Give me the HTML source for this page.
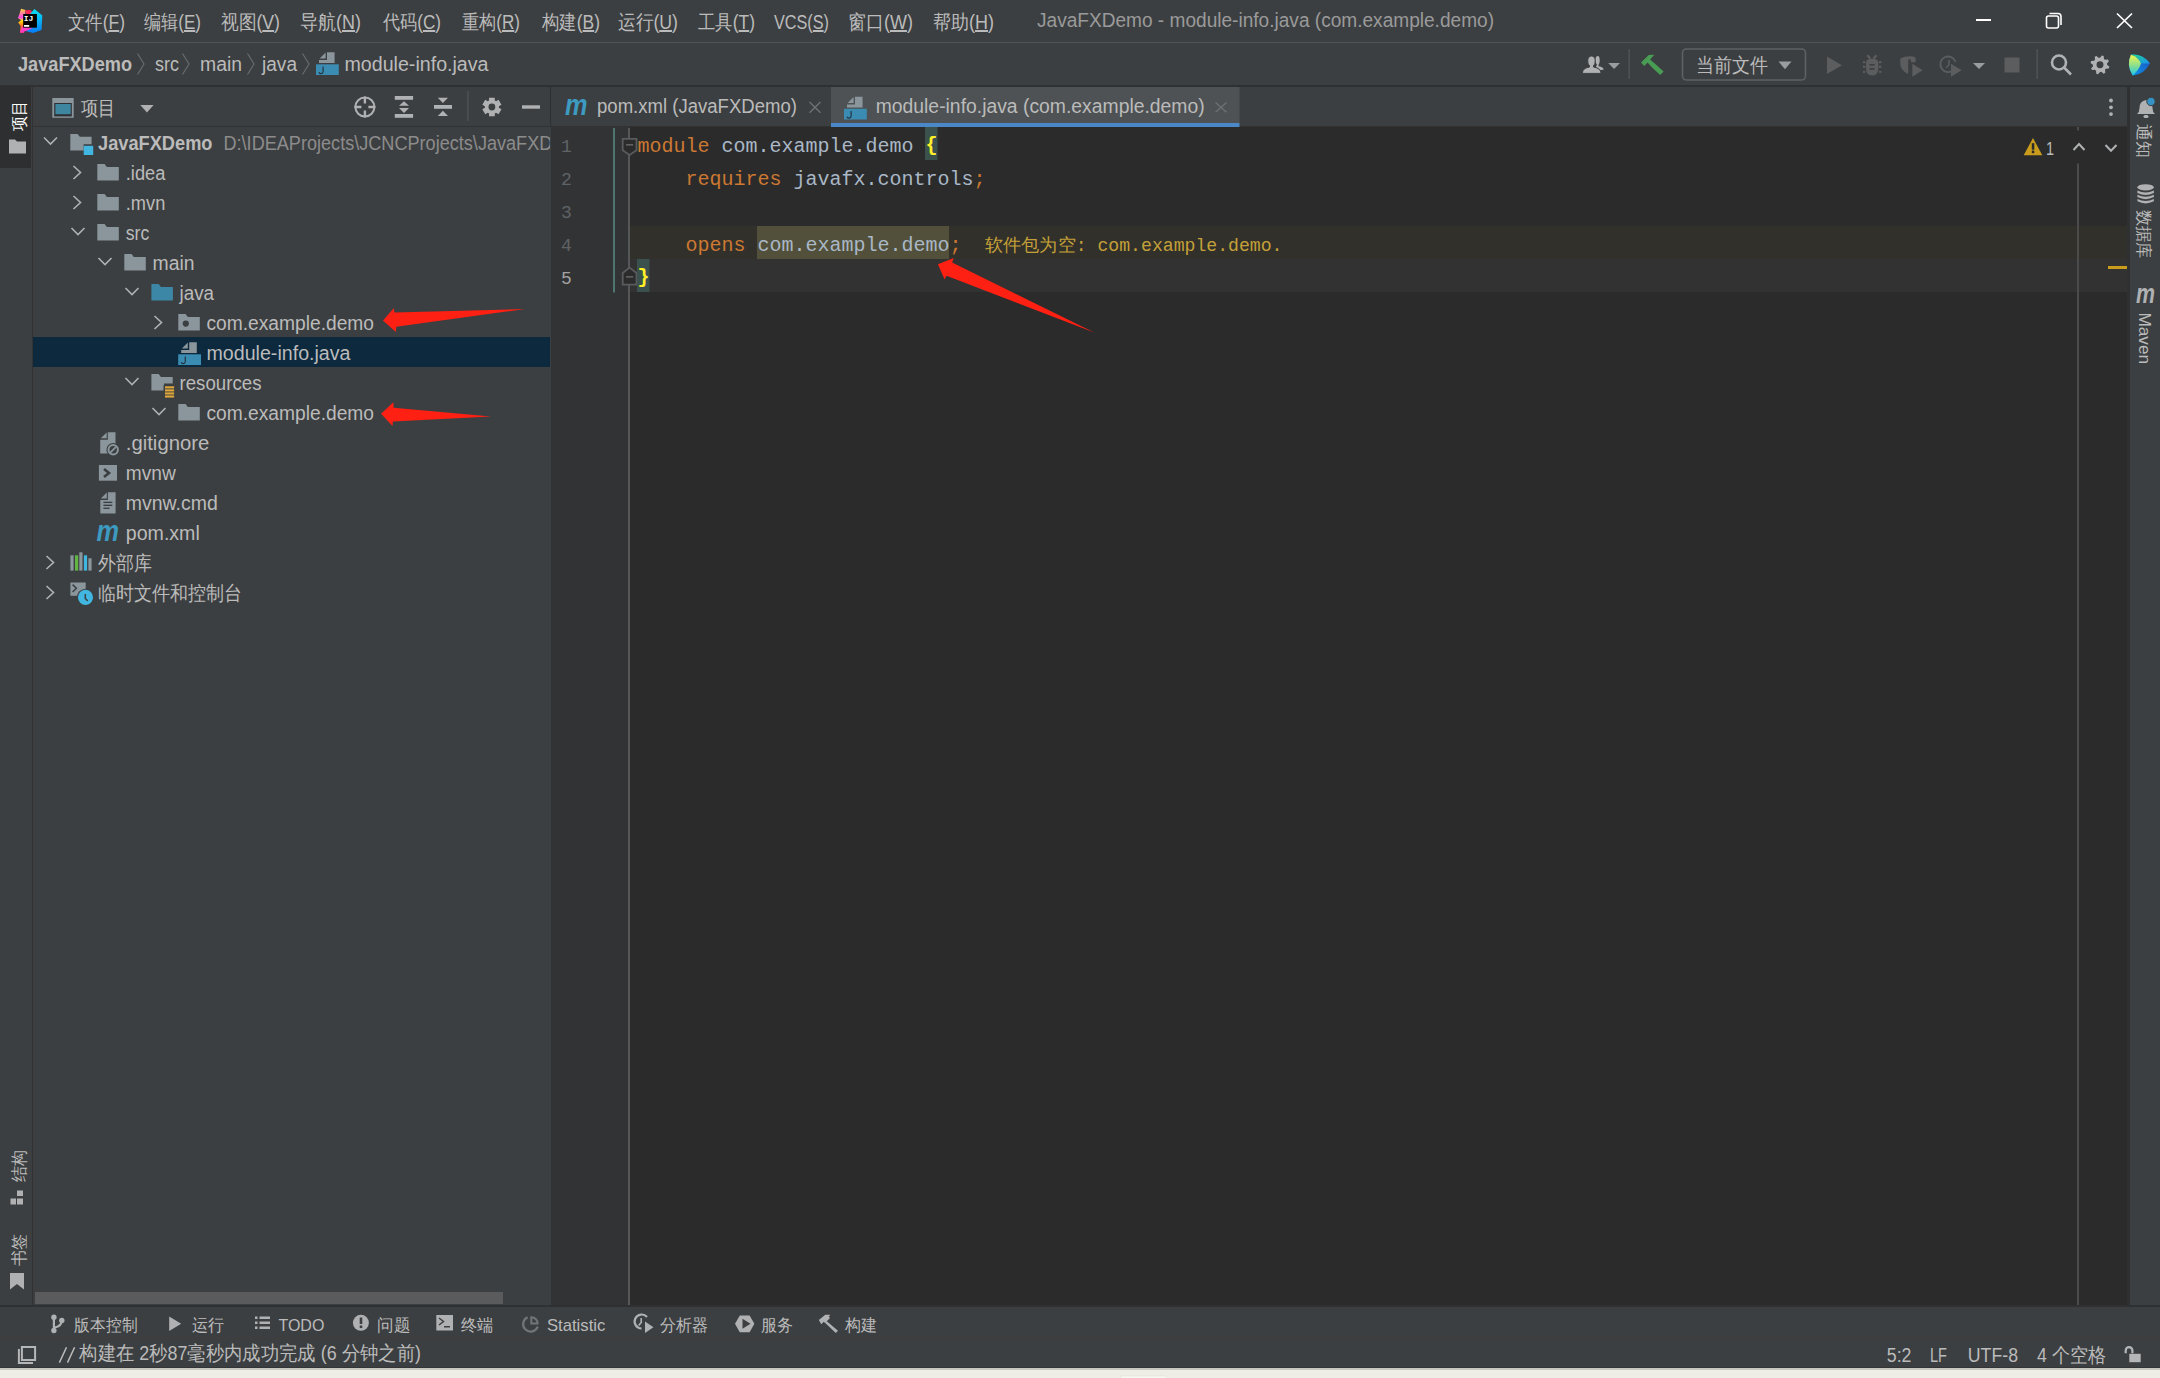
<!DOCTYPE html>
<html><head><meta charset="utf-8">
<style>
*{margin:0;padding:0}
html,body{width:2160px;height:1378px;overflow:hidden;background:#3c3f41}
svg{display:block}
text{white-space:pre}
</style></head><body>
<svg width="2160" height="1378" viewBox="0 0 2160 1378">
<rect x="0" y="0" width="2160" height="1378" fill="#3c3f41" />
<rect x="0" y="42" width="2160" height="1" fill="#515355" />
<rect x="0" y="85" width="2160" height="2" fill="#2e3032" />
<rect x="0" y="86" width="31" height="82" fill="#2d2f31" />
<rect x="32" y="86" width="1" height="1219" fill="#323232" />
<rect x="33" y="126" width="517" height="1" fill="#323232" />
<rect x="33" y="337" width="517" height="30" fill="#0d293e" />
<rect x="35" y="1292" width="468" height="12" fill="#5a5b5d" />
<rect x="550" y="86" width="1" height="41" fill="#2d2f31" />
<rect x="551" y="126" width="1577" height="1" fill="#323232" />
<rect x="551" y="127" width="1577" height="1178" fill="#2b2b2b" />
<rect x="551" y="127" width="79" height="1178" fill="#313335" />
<rect x="630" y="226" width="1497" height="33" fill="#32302b" />
<rect x="630" y="259" width="1497" height="33" fill="#323232" />
<rect x="2127" y="86" width="3" height="1219" fill="#2e3032" />
<rect x="0" y="1305" width="2160" height="2" fill="#2f3031" />
<rect x="0" y="1338" width="2160" height="1" fill="#403d3a" />
<rect x="0" y="1367" width="2160" height="1" fill="#323436" />
<rect x="0" y="1368" width="2160" height="2" fill="#c9c8c0" />
<rect x="0" y="1370" width="2160" height="8" fill="#efeee6" />
<rect x="1120.5" y="1375.8" width="46" height="4" rx="2" fill="#f7f8f1" stroke="#e3e2d8" stroke-width="0.8"/>
<defs>
<linearGradient id="ijL" x1="0" y1="0" x2="0" y2="1"><stop offset="0" stop-color="#ffd23a"/><stop offset="0.35" stop-color="#ff45ed"/><stop offset="0.5" stop-color="#ffe10a"/><stop offset="0.7" stop-color="#ff6a2a"/><stop offset="1" stop-color="#ff2f8f"/></linearGradient>
<linearGradient id="ijR" x1="0" y1="0" x2="0" y2="1"><stop offset="0" stop-color="#07e3f2"/><stop offset="1" stop-color="#087cfa"/></linearGradient>
</defs>
<polygon points="21,8.8 25.5,10 24,33 19.9,32.7 20.6,26 18.2,22.4 21,20.2 17.9,18.1 19.8,13" fill="url(#ijL)"/>
<polygon points="25,10.3 30.5,10 33,13.5 27,16" fill="#fe2857"/>
<polygon points="34.5,9 42.3,15.5 41.5,30 33,33 24,30.5 30,14" fill="url(#ijR)"/>
<polygon points="20,32.7 23,26 33,28 26,31" fill="#ff3cc8"/>
<rect x="23.2" y="14" width="13.7" height="13.7" fill="#000"/>
<text x="23.8" y="21" font-family="Liberation Mono" font-weight="bold" font-size="8" fill="#fff">IJ</text>
<rect x="24" y="25" width="5.2" height="1.8" fill="#fff"/>

<text x="68" y="29" font-family="Liberation Sans" font-size="20" fill="#bbbbbb" font-weight="normal" textLength="57" lengthAdjust="spacingAndGlyphs" >文件(<tspan text-decoration="underline">F</tspan>)</text>
<text x="144" y="29" font-family="Liberation Sans" font-size="20" fill="#bbbbbb" font-weight="normal" textLength="57" lengthAdjust="spacingAndGlyphs" >编辑(<tspan text-decoration="underline">E</tspan>)</text>
<text x="221" y="29" font-family="Liberation Sans" font-size="20" fill="#bbbbbb" font-weight="normal" textLength="59" lengthAdjust="spacingAndGlyphs" >视图(<tspan text-decoration="underline">V</tspan>)</text>
<text x="300" y="29" font-family="Liberation Sans" font-size="20" fill="#bbbbbb" font-weight="normal" textLength="61" lengthAdjust="spacingAndGlyphs" >导航(<tspan text-decoration="underline">N</tspan>)</text>
<text x="383" y="29" font-family="Liberation Sans" font-size="20" fill="#bbbbbb" font-weight="normal" textLength="58" lengthAdjust="spacingAndGlyphs" >代码(<tspan text-decoration="underline">C</tspan>)</text>
<text x="462" y="29" font-family="Liberation Sans" font-size="20" fill="#bbbbbb" font-weight="normal" textLength="58" lengthAdjust="spacingAndGlyphs" >重构(<tspan text-decoration="underline">R</tspan>)</text>
<text x="542" y="29" font-family="Liberation Sans" font-size="20" fill="#bbbbbb" font-weight="normal" textLength="58" lengthAdjust="spacingAndGlyphs" >构建(<tspan text-decoration="underline">B</tspan>)</text>
<text x="618" y="29" font-family="Liberation Sans" font-size="20" fill="#bbbbbb" font-weight="normal" textLength="60" lengthAdjust="spacingAndGlyphs" >运行(<tspan text-decoration="underline">U</tspan>)</text>
<text x="698" y="29" font-family="Liberation Sans" font-size="20" fill="#bbbbbb" font-weight="normal" textLength="57" lengthAdjust="spacingAndGlyphs" >工具(<tspan text-decoration="underline">T</tspan>)</text>
<text x="774" y="29" font-family="Liberation Sans" font-size="20" fill="#bbbbbb" font-weight="normal" textLength="55" lengthAdjust="spacingAndGlyphs" >VCS(<tspan text-decoration="underline">S</tspan>)</text>
<text x="848" y="29" font-family="Liberation Sans" font-size="20" fill="#bbbbbb" font-weight="normal" textLength="65" lengthAdjust="spacingAndGlyphs" >窗口(<tspan text-decoration="underline">W</tspan>)</text>
<text x="933" y="29" font-family="Liberation Sans" font-size="20" fill="#bbbbbb" font-weight="normal" textLength="61" lengthAdjust="spacingAndGlyphs" >帮助(<tspan text-decoration="underline">H</tspan>)</text>
<text x="1037" y="27" font-family="Liberation Sans" font-size="20" fill="#9a9a9a" font-weight="normal" textLength="457" lengthAdjust="spacingAndGlyphs" >JavaFXDemo - module-info.java (com.example.demo)</text>
<rect x="1976" y="19" width="15" height="2" fill="#ffffff" />
<rect x="2046.5" y="16" width="12" height="12" rx="2" fill="none" stroke="#fff" stroke-width="1.6"/>
<path d="M2049.5,13.5 h8.5 a3,3 0 0 1 3,3 v8.5" fill="none" stroke="#fff" stroke-width="1.6"/>
<path d="M2117,13.5 L2132,28 M2132,13.5 L2117,28" stroke="#fff" stroke-width="1.7"/>
<text x="18" y="71" font-family="Liberation Sans" font-size="20" fill="#bbbbbb" font-weight="bold" textLength="114" lengthAdjust="spacingAndGlyphs" >JavaFXDemo</text>
<path d="M137.5,53.5 L144.0,64 L137.5,74.5" fill="none" stroke="#6b6d6f" stroke-width="1.1"/>
<path d="M182.5,53.5 L189.0,64 L182.5,74.5" fill="none" stroke="#6b6d6f" stroke-width="1.1"/>
<path d="M247.5,53.5 L254.0,64 L247.5,74.5" fill="none" stroke="#6b6d6f" stroke-width="1.1"/>
<path d="M302.5,53.5 L309.0,64 L302.5,74.5" fill="none" stroke="#6b6d6f" stroke-width="1.1"/>
<text x="155" y="71" font-family="Liberation Sans" font-size="20" fill="#bbbbbb" font-weight="normal" textLength="24" lengthAdjust="spacingAndGlyphs" >src</text>
<text x="200" y="71" font-family="Liberation Sans" font-size="20" fill="#bbbbbb" font-weight="normal" textLength="42" lengthAdjust="spacingAndGlyphs" >main</text>
<text x="262" y="71" font-family="Liberation Sans" font-size="20" fill="#bbbbbb" font-weight="normal" textLength="35" lengthAdjust="spacingAndGlyphs" >java</text>
<path d="M327,52.2 h7.6 v10.7 h-15.6 v-3 h8 z" fill="#8a959c"/><path d="M319.6,58.6 L325.6,52.6 V58.6 Z" fill="#8a959c"/>
<rect x="316" y="64.3" width="22.8" height="10.7" fill="#3a8cb3" />
<path d="M323.1,66.5 v5.2 a2.2,2.2 0 0 1 -4.2,0.6" fill="none" stroke="#22313b" stroke-width="1.15"/>
<text x="344.5" y="71" font-family="Liberation Sans" font-size="20" fill="#bbbbbb" font-weight="normal" textLength="144" lengthAdjust="spacingAndGlyphs" >module-info.java</text>
<g fill="#afb1b3">
<path d="M1596,66.8 L1597,64.5 C1596,63.5 1595.4,62 1595.4,60 C1595.4,57.5 1596.5,56.1 1597.8,56.1 C1599,56.1 1599.7,57.5 1599.7,60 C1599.7,62 1599.4,63.5 1598.6,64.5 L1598.6,66.3 C1601.8,67 1603.6,68 1603.6,69.8 L1600,70 Z"/>
<path d="M1582.4,73.4 C1582.4,69.5 1585,68 1589.5,67 L1589.5,65.5 C1588,64.5 1587.8,62.5 1587.8,60.5 C1587.8,57.5 1589.5,56 1591.5,56 C1593.5,56 1595.2,57.5 1595.2,60.5 C1595.2,62.5 1595,64.5 1593.5,65.5 L1593.5,67 C1598,68 1601,69.5 1601,73.4 Z" stroke="#3c3f41" stroke-width="1"/>
</g>
<path d="M1608.2,63 h11.8 l-5.9,6 z" fill="#9a9da0"/>
<rect x="1628.5" y="49" width="1.2" height="30" fill="#55585a" />
<path d="M1641,62.6 L1648.8,55 L1654.3,54.8 L1650.1,59.4 L1655.6,64.2 L1663.6,71.6 L1660.2,75 L1652.1,67.6 L1647.5,62.4 L1644.3,65.9 Z" fill="#499c54"/>
<rect x="1682.5" y="49" width="123" height="31" rx="4" fill="none" stroke="#5e6163" stroke-width="1.6"/>
<text x="1695.5" y="72" font-family="Liberation Sans" font-size="20" fill="#bbbbbb" font-weight="normal" textLength="72" lengthAdjust="spacingAndGlyphs" >当前文件</text>
<path d="M1778.5,61.5 h13 l-6.5,7.8 z" fill="#9a9da0"/>
<path d="M1827,56.6 L1842,65.3 L1827,74 Z" fill="#5b5d5f"/>
<g fill="#5b5d5f">
<path d="M1867.3,55.3 L1870.3,58.6 M1876.5,55.3 L1873.5,58.6" stroke="#5b5d5f" stroke-width="2.3"/>
<path d="M1866,63 Q1866,58.8 1872.2,58.8 Q1878.4,58.8 1878.4,63 V68 Q1878.4,75.5 1872.2,75.5 Q1866,75.5 1866,68 Z"/>
<rect x="1862.9" y="61.2" width="2.4" height="2"/><rect x="1879" y="61.2" width="2.4" height="2"/>
<rect x="1862.9" y="65.8" width="2.4" height="2"/><rect x="1879" y="65.8" width="2.4" height="2"/>
<rect x="1862.9" y="70.9" width="2.4" height="2"/><rect x="1879" y="70.9" width="2.4" height="2"/>
<rect x="1869.5" y="64" width="5.1" height="1.6" fill="#3c3f41"/><rect x="1869.5" y="68.1" width="5.1" height="1.7" fill="#3c3f41"/>
</g>
<g fill="#5b5d5f"><path d="M1900.3,58.6 Q1905,56 1911,56.3 Q1915.6,57 1915.6,58 V62.3 H1911 V59.5 H1908.2 V72 L1907.9,73.9 Q1900.3,70 1900.3,64 Z"/><path d="M1912.3,63.7 L1922.7,70.2 L1912.3,76.7 Z"/></g>
<g><path d="M1953.5,70 A7.8,7.8 0 1 1 1955.6,62" fill="none" stroke="#5b5d5f" stroke-width="1.8"/><path d="M1949,59.8 v5 l-2.8,3" fill="none" stroke="#5b5d5f" stroke-width="1.5"/><path d="M1951,63.7 L1961.6,70.2 L1951,76.7 Z" fill="#5b5d5f"/></g>
<path d="M1973,63 h12 l-6.0,6 z" fill="#9a9da0"/>
<rect x="2004.5" y="57.5" width="15" height="15" fill="#5b5d5f" />
<rect x="2036.5" y="49" width="1.2" height="30" fill="#55585a" />
<g fill="none" stroke="#afb1b3" stroke-width="2.6"><circle cx="2059" cy="62.5" r="7"/><path d="M2064,67.5 L2071,74.5"/></g>
<polygon points="2109.41,66.71 2108.86,68.51 2105.89,68.77 2105.00,69.84 2105.30,72.80 2103.64,73.68 2101.36,71.77 2099.97,71.90 2098.09,74.21 2096.29,73.66 2096.03,70.69 2094.96,69.80 2092.00,70.10 2091.12,68.44 2093.03,66.16 2092.90,64.77 2090.59,62.89 2091.14,61.09 2094.11,60.83 2095.00,59.76 2094.70,56.80 2096.36,55.92 2098.64,57.83 2100.03,57.70 2101.91,55.39 2103.71,55.94 2103.97,58.91 2105.04,59.80 2108.00,59.50 2108.88,61.16 2106.97,63.44 2107.10,64.83" fill="#afb1b3"/><circle cx="2100" cy="64.8" r="3.46" fill="#3c3f41"/>
<defs>
<linearGradient id="lgA" x1="0" y1="0" x2="0" y2="1"><stop offset="0" stop-color="#f4f84a"/><stop offset="0.5" stop-color="#8fe08a"/><stop offset="1" stop-color="#21c8e6"/></linearGradient>
<linearGradient id="lgB" x1="0" y1="0" x2="1" y2="1"><stop offset="0" stop-color="#21d789"/><stop offset="1" stop-color="#1a8ff0"/></linearGradient>
<linearGradient id="lgC" x1="1" y1="0" x2="0" y2="1"><stop offset="0" stop-color="#1e4db2"/><stop offset="1" stop-color="#0a9af5"/></linearGradient>
</defs>
<path d="M2130.9,54.7 A21,21 0 0 1 2149.9,63.6 A21,21 0 0 1 2132.8,75.4 A21,21 0 0 1 2130.9,54.7 Z" fill="url(#lgC)"/>
<path d="M2130.9,54.7 A21,21 0 0 1 2149.9,63.6 L2141,63.6 Q2139,57.5 2130.9,54.7 Z" fill="url(#lgB)"/>
<path d="M2130.9,54.7 Q2139,57.5 2141,63.6 Q2139,70 2132.8,75.4 A21,21 0 0 1 2130.9,54.7 Z" fill="url(#lgA)"/>

<text transform="translate(24.6,131.2) rotate(-90)" font-family="Liberation Sans" font-size="17" fill="#ffffff" textLength="30" lengthAdjust="spacingAndGlyphs">项目</text>
<path d="M9,139.5 h6 l2,2 h9 v12 h-17 z" fill="#afb1b3"/>
<text transform="translate(24.6,1182.2) rotate(-90)" font-family="Liberation Sans" font-size="17" fill="#bbbbbb" textLength="32" lengthAdjust="spacingAndGlyphs">结构</text>
<g fill="#afb1b3"><rect x="17" y="1190.5" width="6" height="5.5"/><rect x="10.5" y="1198.5" width="5.5" height="6"/><rect x="17" y="1198.5" width="6" height="6"/></g>
<text transform="translate(24.6,1266.2) rotate(-90)" font-family="Liberation Sans" font-size="17" fill="#bbbbbb" textLength="32" lengthAdjust="spacingAndGlyphs">书签</text>
<path d="M10,1273 h14 v16.5 l-7,-5.5 l-7,5.5 z" fill="#afb1b3"/>
<g fill="#afb1b3"><path d="M2137,114 q2.5,-2 2.5,-6 q0,-7 6.5,-8 q6.5,1 6.5,8 q0,4 2.5,6 z"/><rect x="2143.5" y="115" width="5" height="3" rx="1.5"/></g>
<circle cx="2151" cy="101.5" r="4.2" fill="#3592c4" stroke="#3c3f41" stroke-width="1"/>
<text transform="translate(2138,124) rotate(90)" font-family="Liberation Sans" font-size="17" fill="#bbbbbb" textLength="33.8" lengthAdjust="spacingAndGlyphs">通知</text>
<g fill="#afb1b3"><ellipse cx="2145.6" cy="187.3" rx="8.2" ry="3.1"/><path d="M2137.4,190.5 Q2145.6,194.5 2153.9,190.5 V192.9 Q2145.6,197.1 2137.4,192.9 Z"/><path d="M2137.4,194.7 Q2145.6,198.7 2153.9,194.7 V197.1 Q2145.6,201.29999999999998 2137.4,197.1 Z"/><path d="M2137.4,198.9 Q2145.6,202.9 2153.9,198.9 V201.3 Q2145.6,205.5 2137.4,201.3 Z"/></g>
<text transform="translate(2138,209.5) rotate(90)" font-family="Liberation Sans" font-size="17" fill="#bbbbbb" textLength="48.8" lengthAdjust="spacingAndGlyphs">数据库</text>
<text x="2136" y="302.5" font-family="Liberation Sans" font-size="27" font-weight="bold" font-style="italic" fill="#afb1b3" textLength="19" lengthAdjust="spacingAndGlyphs">m</text>
<text transform="translate(2138.5,312.5) rotate(90)" font-family="Liberation Sans" font-size="17" fill="#bbbbbb" textLength="51.5" lengthAdjust="spacingAndGlyphs">Maven</text>
<rect x="52.3" y="98" width="21.4" height="19.8" fill="#8a959c"/><rect x="54.2" y="103" width="17.6" height="13.4" fill="#2e3133"/><rect x="55.4" y="104" width="15.3" height="10.2" fill="#3e86a0"/>
<text x="81" y="115" font-family="Liberation Sans" font-size="20" fill="#bbbbbb" font-weight="normal" textLength="34.5" lengthAdjust="spacingAndGlyphs" >项目</text>
<path d="M140.3,105 h13.3 l-6.65,7.4 z" fill="#afb1b3"/>
<g fill="none" stroke="#afb1b3" stroke-width="2"><circle cx="364.9" cy="107" r="9.5"/><path d="M364.9,96.5 v7 M364.9,110.5 v7 M354.4,107 h7 M368.4,107 h7" stroke-width="2.4"/></g>
<g fill="#afb1b3"><rect x="394.8" y="96" width="18.3" height="3.8"/><rect x="394.8" y="114" width="18.3" height="3.8"/><path d="M404,101.3 L409,105.8 H399 Z"/><path d="M399,108 H409 L404,113.1 Z"/></g>
<g fill="#afb1b3"><rect x="434" y="105" width="18" height="3.8"/><path d="M437.8,97.8 H448 L442.9,103 Z"/><path d="M442.9,110.8 L448,116 H437.8 Z"/></g>
<rect x="467.2" y="91" width="1.4" height="30" fill="#505254" />
<polygon points="489.00,97.64 494.80,97.64 494.78,100.56 496.04,101.29 498.56,99.81 501.46,104.83 498.92,106.27 498.92,107.73 501.46,109.17 498.56,114.19 496.04,112.71 494.78,113.44 494.80,116.36 489.00,116.36 489.02,113.44 487.76,112.71 485.24,114.19 482.34,109.17 484.88,107.73 484.88,106.27 482.34,104.83 485.24,99.81 487.76,101.29 489.02,100.56" fill="#afb1b3"/><circle cx="491.9" cy="107" r="3.4" fill="#3c3f41"/>
<rect x="522" y="105.3" width="18" height="3.4" fill="#afb1b3" />
<path d="M44,137.5 L50.5,144.0 L57,137.5" fill="none" stroke="#afb1b3" stroke-width="1.6"/>
<path d="M70.3,134 h7.3 l2.2,2.8 h11.8 v7.5 h-8 v6.3 h-13.3 z" fill="#8a959c"/>
<rect x="83.7" y="145.8" width="9.5" height="9.2" fill="#40b6e0" />
<text x="98" y="150" font-family="Liberation Sans" font-size="20" fill="#bbbbbb" font-weight="bold" textLength="114.5" lengthAdjust="spacingAndGlyphs" >JavaFXDemo</text>
<defs><clipPath id="pc"><rect x="33" y="86" width="517" height="1219"/></clipPath></defs>
<text x="223.5" y="150" font-family="Liberation Sans" font-size="20" fill="#8c8c8c" font-weight="normal" textLength="364" lengthAdjust="spacingAndGlyphs" clip-path="url(#pc)">D:\IDEAProjects\JCNCProjects\JavaFXDemo</text>
<path d="M73.5,166 L80.5,172.5 L73.5,179" fill="none" stroke="#afb1b3" stroke-width="1.6"/>
<path d="M97.3,164 h7.3 l2.2,3 h12 v13.6 h-21.5 z" fill="#8a959c"/>
<text x="125.8" y="180" font-family="Liberation Sans" font-size="20" fill="#bbbbbb" font-weight="normal" textLength="39.5" lengthAdjust="spacingAndGlyphs" >.idea</text>
<path d="M73.5,196 L80.5,202.5 L73.5,209" fill="none" stroke="#afb1b3" stroke-width="1.6"/>
<path d="M97.3,194 h7.3 l2.2,3 h12 v13.6 h-21.5 z" fill="#8a959c"/>
<text x="125.8" y="210" font-family="Liberation Sans" font-size="20" fill="#bbbbbb" font-weight="normal" textLength="39.5" lengthAdjust="spacingAndGlyphs" >.mvn</text>
<path d="M71.5,228 L78.0,234.5 L84.5,228" fill="none" stroke="#afb1b3" stroke-width="1.6"/>
<path d="M97.3,224 h7.3 l2.2,3 h12 v13.6 h-21.5 z" fill="#8a959c"/>
<text x="125.8" y="240" font-family="Liberation Sans" font-size="20" fill="#bbbbbb" font-weight="normal" textLength="23.5" lengthAdjust="spacingAndGlyphs" >src</text>
<path d="M98.5,258 L105.0,264.5 L111.5,258" fill="none" stroke="#afb1b3" stroke-width="1.6"/>
<path d="M124.3,254 h7.3 l2.2,3 h12 v13.6 h-21.5 z" fill="#8a959c"/>
<text x="152.5" y="270" font-family="Liberation Sans" font-size="20" fill="#bbbbbb" font-weight="normal" textLength="42" lengthAdjust="spacingAndGlyphs" >main</text>
<path d="M125.5,288 L132.0,294.5 L138.5,288" fill="none" stroke="#afb1b3" stroke-width="1.6"/>
<path d="M151.4,284 h7.3 l2.2,3 h12 v13.6 h-21.5 z" fill="#3d87a6"/>
<text x="179.5" y="300" font-family="Liberation Sans" font-size="20" fill="#bbbbbb" font-weight="normal" textLength="34.5" lengthAdjust="spacingAndGlyphs" >java</text>
<path d="M154.5,316 L161.5,322.5 L154.5,329" fill="none" stroke="#afb1b3" stroke-width="1.6"/>
<path d="M178.3,314 h7.3 l2.2,3 h12 v13.6 h-21.5 z" fill="#8a959c"/>
<circle cx="185.8" cy="323.6" r="3.1" fill="#3c3f41"/>
<text x="206.5" y="330" font-family="Liberation Sans" font-size="20" fill="#bbbbbb" font-weight="normal" textLength="167.5" lengthAdjust="spacingAndGlyphs" >com.example.demo</text>
<path d="M189.2,342.2 h7.6 v10.7 h-15.6 v-3 h8 z" fill="#8a959c"/><path d="M181.79999999999998,348.59999999999997 L187.79999999999998,342.59999999999997 V348.59999999999997 Z" fill="#8a959c"/>
<rect x="178.2" y="354.3" width="22.8" height="10.7" fill="#3a8cb3" />
<path d="M185.29999999999998,356.5 v5.2 a2.2,2.2 0 0 1 -4.2,0.6" fill="none" stroke="#22313b" stroke-width="1.15"/>
<text x="206.5" y="360" font-family="Liberation Sans" font-size="20" fill="#bbbbbb" font-weight="normal" textLength="144" lengthAdjust="spacingAndGlyphs" >module-info.java</text>
<path d="M125.5,378 L132.0,384.5 L138.5,378" fill="none" stroke="#afb1b3" stroke-width="1.6"/>
<path d="M151.4,374 h7.3 l2.2,3 h11.8 v6.6 h-8.7 v7 h-12.6 z" fill="#8a959c"/>
<rect x="163.5" y="385.2" width="12" height="13.2" fill="#3c3f41"/>
<rect x="165" y="386.3" width="9.1" height="2.1" fill="#e0a83a" />
<rect x="165" y="389.35" width="9.1" height="2.1" fill="#e0a83a" />
<rect x="165" y="392.40000000000003" width="9.1" height="2.1" fill="#e0a83a" />
<rect x="165" y="395.45" width="9.1" height="2.1" fill="#e0a83a" />
<text x="179.5" y="390" font-family="Liberation Sans" font-size="20" fill="#bbbbbb" font-weight="normal" textLength="82" lengthAdjust="spacingAndGlyphs" >resources</text>
<path d="M152.5,408 L159.0,414.5 L165.5,408" fill="none" stroke="#afb1b3" stroke-width="1.6"/>
<path d="M178.3,404 h7.3 l2.2,3 h12 v13.6 h-21.5 z" fill="#8a959c"/>
<text x="206.5" y="420" font-family="Liberation Sans" font-size="20" fill="#bbbbbb" font-weight="normal" textLength="167.5" lengthAdjust="spacingAndGlyphs" >com.example.demo</text>
<path d="M100.7,438.3 L106.7,432.4 V438.3 Z" fill="#8a959c"/><path d="M107.8,432.2 H115.5 V453.4 H100.2 V439.8 H107.8 Z" fill="#8a959c"/>
<circle cx="113.2" cy="449.8" r="6.8" fill="#3c3f41"/><circle cx="113.2" cy="449.8" r="4.7" fill="none" stroke="#8a959c" stroke-width="2"/><path d="M110,452.8 L116,446.8" stroke="#8a959c" stroke-width="1.8"/>
<text x="125.8" y="450" font-family="Liberation Sans" font-size="20" fill="#bbbbbb" font-weight="normal" textLength="83.5" lengthAdjust="spacingAndGlyphs" >.gitignore</text>
<rect x="98.9" y="465" width="18.1" height="15.7" fill="#8a959c" />
<path d="M104,469 L109,473 L104,477" fill="none" stroke="#3c3f41" stroke-width="2.6"/>
<text x="125.8" y="480" font-family="Liberation Sans" font-size="20" fill="#bbbbbb" font-weight="normal" textLength="50" lengthAdjust="spacingAndGlyphs" >mvnw</text>
<path d="M100.8,498.40000000000003 L106.8,492.5 V498.40000000000003 Z" fill="#8a959c"/><path d="M107.89999999999999,492.3 H115.6 V513.5 H100.3 V499.90000000000003 H107.89999999999999 Z" fill="#8a959c"/>
<rect x="103.4" y="501.7" width="8.9" height="1.35" fill="#3c3f41" />
<rect x="103.4" y="504.65" width="8.9" height="1.35" fill="#3c3f41" />
<rect x="103.4" y="507.59999999999997" width="6.1" height="1.35" fill="#3c3f41" />
<text x="125.8" y="510" font-family="Liberation Sans" font-size="20" fill="#bbbbbb" font-weight="normal" textLength="92" lengthAdjust="spacingAndGlyphs" >mvnw.cmd</text>
<text x="96.5" y="540.5" font-family="Liberation Sans" font-size="29" font-weight="bold" font-style="italic" fill="#3d9ac0" textLength="22.5" lengthAdjust="spacingAndGlyphs" transform="translate(0,0)">m</text>
<text x="125.8" y="540" font-family="Liberation Sans" font-size="20" fill="#bbbbbb" font-weight="normal" textLength="74" lengthAdjust="spacingAndGlyphs" >pom.xml</text>
<path d="M46.5,556 L53.5,562.5 L46.5,569" fill="none" stroke="#afb1b3" stroke-width="1.6"/>
<rect x="70.4" y="555.3" width="3.2" height="15.300000000000068" fill="#8a959c" />
<rect x="75" y="555.3" width="3.2" height="15.300000000000068" fill="#62b543" />
<rect x="79.3" y="552.3" width="3.2" height="18.300000000000068" fill="#8a959c" />
<rect x="83.9" y="555.3" width="3.2" height="15.300000000000068" fill="#40b6e0" />
<rect x="88.4" y="558.3" width="3.2" height="12.300000000000068" fill="#8a959c" />
<text x="98.3" y="570" font-family="Liberation Sans" font-size="20" fill="#bbbbbb" font-weight="normal" textLength="54" lengthAdjust="spacingAndGlyphs" >外部库</text>
<path d="M46.5,586 L53.5,592.5 L46.5,599" fill="none" stroke="#afb1b3" stroke-width="1.6"/>
<rect x="70.4" y="582.5" width="15.3" height="13.3" fill="#8a959c"/><path d="M72.6,584.6 l3.8,3.7 l-3.8,3.7" fill="none" stroke="#3c3f41" stroke-width="1.5"/>
<circle cx="85.5" cy="597.4" r="8.6" fill="#3c3f41"/><circle cx="85.5" cy="597.4" r="7.55" fill="#40b6e0"/><path d="M85.3,594 v4.5 l2.4,2.4" fill="none" stroke="#3c3f41" stroke-width="1.5"/>
<text x="98.3" y="600" font-family="Liberation Sans" font-size="20" fill="#bbbbbb" font-weight="normal" textLength="144" lengthAdjust="spacingAndGlyphs" >临时文件和控制台</text>
<text x="565" y="114.5" font-family="Liberation Sans" font-size="29" font-weight="bold" font-style="italic" fill="#3d9ac0" textLength="22.5" lengthAdjust="spacingAndGlyphs">m</text>
<text x="597" y="113" font-family="Liberation Sans" font-size="20" fill="#bbbbbb" font-weight="normal" textLength="200" lengthAdjust="spacingAndGlyphs" >pom.xml (JavaFXDemo)</text>
<path d="M809.5,102 L820.5,112.8 M820.5,102 L809.5,112.8" stroke="#6d6f71" stroke-width="1.5"/>
<rect x="831" y="87" width="408.5" height="36" fill="#4e5254" />
<rect x="831" y="123" width="408.5" height="4" fill="#4a88c7" />
<path d="M855,96.7 h7.6 v10.7 h-15.6 v-3 h8 z" fill="#8a959c"/><path d="M847.6,103.10000000000001 L853.6,97.10000000000001 V103.10000000000001 Z" fill="#8a959c"/>
<rect x="844" y="108.8" width="22.8" height="10.7" fill="#3a8cb3" />
<path d="M851.1,111.0 v5.2 a2.2,2.2 0 0 1 -4.2,0.6" fill="none" stroke="#22313b" stroke-width="1.15"/>
<text x="875.7" y="113" font-family="Liberation Sans" font-size="20" fill="#bbbbbb" font-weight="normal" textLength="329" lengthAdjust="spacingAndGlyphs" >module-info.java (com.example.demo)</text>
<path d="M1215.5,102.5 L1226.5,112.3 M1226.5,102.5 L1215.5,112.3" stroke="#6d6f71" stroke-width="1.5"/>
<circle cx="2111" cy="100.5" r="1.9" fill="#afb1b3"/>
<circle cx="2111" cy="107.3" r="1.9" fill="#afb1b3"/>
<circle cx="2111" cy="114.1" r="1.9" fill="#afb1b3"/>
<rect x="613" y="128" width="2" height="164.5" fill="#4f7571" />
<rect x="628" y="128" width="2" height="1177" fill="#555759" />
<text x="561" y="152" font-family="Liberation Mono" font-size="18" fill="#606366" font-weight="normal" >1</text>
<text x="561" y="185" font-family="Liberation Mono" font-size="18" fill="#606366" font-weight="normal" >2</text>
<text x="561" y="218" font-family="Liberation Mono" font-size="18" fill="#606366" font-weight="normal" >3</text>
<text x="561" y="251" font-family="Liberation Mono" font-size="18" fill="#606366" font-weight="normal" >4</text>
<text x="561" y="284" font-family="Liberation Mono" font-size="18" fill="#a4a3a3" font-weight="normal" >5</text>
<path d="M622.7,138.9 h13.8 v11.4 l-6.9,4.6 l-6.9,-4.6 z" fill="#2b2b2b" stroke="#5a5b5d" stroke-width="1.8"/><rect x="626" y="144" width="7.2" height="1.6" fill="#606264"/>
<path d="M622.7,284.6 h13.8 v-11.6 l-6.9,-5.4 l-6.9,5.4 z" fill="#2b2b2b" stroke="#5a5b5d" stroke-width="1.8"/><rect x="626" y="276.1" width="7.2" height="1.6" fill="#606264"/>
<rect x="925.0" y="127" width="12.5" height="33" fill="#3b514d" />
<text x="637.5" y="152" font-family="Liberation Mono" font-size="20" fill="#cc7832" font-weight="normal" >module</text>
<text x="721.5" y="152" font-family="Liberation Mono" font-size="20" fill="#a9b7c6" font-weight="normal" >com.example.demo</text>
<text x="925.5" y="150.8" font-family="Liberation Mono" font-size="20" fill="#ffef28" font-weight="bold" >{</text>
<text x="685.5" y="185" font-family="Liberation Mono" font-size="20" fill="#cc7832" font-weight="normal" >requires</text>
<text x="793.5" y="185" font-family="Liberation Mono" font-size="20" fill="#a9b7c6" font-weight="normal" >javafx.controls</text>
<text x="973.5" y="185" font-family="Liberation Mono" font-size="20" fill="#cc7832" font-weight="normal" >;</text>
<rect x="757" y="226" width="192" height="33" fill="#52503a" />
<text x="685.5" y="251" font-family="Liberation Mono" font-size="20" fill="#cc7832" font-weight="normal" >opens</text>
<text x="757.5" y="251" font-family="Liberation Mono" font-size="20" fill="#a9b7c6" font-weight="normal" >com.example.demo</text>
<text x="949.5" y="251" font-family="Liberation Mono" font-size="20" fill="#cc7832" font-weight="normal" >;</text>
<text x="985" y="251.2" font-family="Liberation Mono" font-size="18" fill="#c4a038" font-weight="normal" textLength="297.5" lengthAdjust="spacingAndGlyphs" >软件包为空: com.example.demo.</text>
<rect x="637.0" y="259" width="12.5" height="33" fill="#3b514d" />
<text x="637.5" y="282.6" font-family="Liberation Mono" font-size="20" fill="#ffef28" font-weight="bold" >}</text>
<rect x="2077" y="127" width="2" height="3.5" fill="#4b4b4b" />
<rect x="2077" y="163.5" width="2" height="1141.5" fill="#4b4b4b" />
<path d="M2033,138 L2042.3,155.2 H2023.7 Z" fill="#c99c1c"/><rect x="2031.8" y="143.2" width="2.5" height="6.5" fill="#2b2b2b"/><rect x="2031.8" y="150.6" width="2.5" height="2.6" fill="#2b2b2b"/>
<text x="2046" y="155" font-family="Liberation Sans" font-size="18" fill="#bbbbbb" font-weight="normal" textLength="8" lengthAdjust="spacingAndGlyphs" >1</text>
<path d="M2073.5,150 L2079,144 L2084.5,150" fill="none" stroke="#afb1b3" stroke-width="2"/>
<path d="M2105.5,145 L2111,150.8 L2116.5,145" fill="none" stroke="#afb1b3" stroke-width="2"/>
<rect x="2108" y="266" width="19" height="3" fill="#c99c1c" />
<g fill="#afb1b3"><circle cx="53.9" cy="1317.2" r="2.7"/><circle cx="53.9" cy="1330.5" r="2.7"/><circle cx="61.8" cy="1320.4" r="2.7"/></g>
<path d="M53.9,1317 V1330.5 M61.8,1320.4 Q61.8,1326 54.5,1327.5" fill="none" stroke="#afb1b3" stroke-width="2.2"/>
<text x="74.3" y="1331" font-family="Liberation Sans" font-size="17" fill="#bbbbbb" font-weight="normal" textLength="63" lengthAdjust="spacingAndGlyphs" >版本控制</text>
<path d="M169.2,1316.4 L181.2,1323.7 L169.2,1331 Z" fill="#afb1b3"/>
<text x="191.9" y="1331" font-family="Liberation Sans" font-size="17" fill="#bbbbbb" font-weight="normal" textLength="32" lengthAdjust="spacingAndGlyphs" >运行</text>
<rect x="255" y="1316.5" width="2.5" height="2.5" fill="#afb1b3" />
<rect x="259.5" y="1316.5" width="10.5" height="2.5" fill="#afb1b3" />
<rect x="255" y="1321.5" width="2.5" height="2.5" fill="#afb1b3" />
<rect x="259.5" y="1321.5" width="10.5" height="2.5" fill="#afb1b3" />
<rect x="255" y="1326.5" width="2.5" height="2.5" fill="#afb1b3" />
<rect x="259.5" y="1326.5" width="10.5" height="2.5" fill="#afb1b3" />
<text x="278.4" y="1331" font-family="Liberation Sans" font-size="17" fill="#bbbbbb" font-weight="normal" textLength="46" lengthAdjust="spacingAndGlyphs" >TODO</text>
<circle cx="360.9" cy="1322.8" r="8" fill="#afb1b3"/><rect x="359.7" y="1317.5" width="2.6" height="6.5" fill="#3c3f41"/><rect x="359.7" y="1325.5" width="2.6" height="2.6" fill="#3c3f41"/>
<text x="377" y="1331" font-family="Liberation Sans" font-size="17" fill="#bbbbbb" font-weight="normal" textLength="33" lengthAdjust="spacingAndGlyphs" >问题</text>
<rect x="436.3" y="1315" width="16.7" height="15.5" fill="#afb1b3"/><path d="M439,1318 l4.5,3.5 l-4.5,3.5" fill="none" stroke="#3c3f41" stroke-width="1.5"/><rect x="444" y="1326" width="6" height="1.5" fill="#3c3f41"/>
<text x="460.5" y="1331" font-family="Liberation Sans" font-size="17" fill="#bbbbbb" font-weight="normal" textLength="32.5" lengthAdjust="spacingAndGlyphs" >终端</text>
<path d="M527.6,1317.2 A7.5,7.5 0 1 0 537.7,1326.6" stroke="#727476" stroke-width="2.2" fill="none"/><path d="M531.3,1317.2 V1323.5 H537.6 A6.3,6.3 0 0 0 531.3,1317.2 Z" stroke="#727476" stroke-width="2" fill="none"/>
<text x="547" y="1331" font-family="Liberation Sans" font-size="17" fill="#bbbbbb" font-weight="normal" textLength="58.3" lengthAdjust="spacingAndGlyphs" >Statistic</text>
<path d="M647,1317 A7,7 0 1 0 641.5,1328.5" fill="none" stroke="#afb1b3" stroke-width="2.2"/><path d="M641.2,1318 v4.5 l-2.5,3" fill="none" stroke="#afb1b3" stroke-width="1.6"/><path d="M645,1321.5 L653.5,1327.3 L645,1333 Z" fill="#afb1b3"/>
<text x="660" y="1331" font-family="Liberation Sans" font-size="17" fill="#bbbbbb" font-weight="normal" textLength="48" lengthAdjust="spacingAndGlyphs" >分析器</text>
<path d="M739.8,1315.4 H749.6 L754.4,1323.8 L749.6,1332.2 H739.8 L735,1323.8 Z" fill="#afb1b3"/><path d="M742.5,1318.8 L750.5,1323.8 L742.5,1328.8 Z" fill="#3c3f41"/>
<text x="761" y="1331" font-family="Liberation Sans" font-size="17" fill="#bbbbbb" font-weight="normal" textLength="32" lengthAdjust="spacingAndGlyphs" >服务</text>
<g fill="#afb1b3"><path d="M818.8,1320 l6.5,-5.2 l5,0 l-1.5,2 l1.2,1.2 l-5,5 l-1.2,-1.2 l-2.5,2.5 z"/><path d="M826.5,1321 l11.5,9.8 l-2.2,2.2 l-10.8,-10.3 z"/></g>
<text x="845" y="1331" font-family="Liberation Sans" font-size="17" fill="#bbbbbb" font-weight="normal" textLength="32" lengthAdjust="spacingAndGlyphs" >构建</text>
<g fill="none" stroke="#b4b6b8" stroke-width="2"><rect x="21.9" y="1347" width="13.2" height="13"/><path d="M18.9,1349 V1363.1 H33"/></g>
<path d="M59.4,1362.6 L66.5,1347.3 M67.5,1362.6 L74.6,1347.3" stroke="#bbbbbb" stroke-width="1.5"/>
<text x="79.4" y="1360" font-family="Liberation Sans" font-size="19.5" fill="#bbbbbb" font-weight="normal" textLength="341.5" lengthAdjust="spacingAndGlyphs" >构建在 2秒87毫秒内成功完成 (6 分钟之前)</text>
<text x="1886.8" y="1361.5" font-family="Liberation Sans" font-size="19.5" fill="#bbbbbb" font-weight="normal" textLength="24.7" lengthAdjust="spacingAndGlyphs" >5:2</text>
<text x="1930" y="1361.5" font-family="Liberation Sans" font-size="19.5" fill="#bbbbbb" font-weight="normal" textLength="17" lengthAdjust="spacingAndGlyphs" >LF</text>
<text x="1967.8" y="1361.5" font-family="Liberation Sans" font-size="19.5" fill="#bbbbbb" font-weight="normal" textLength="50.2" lengthAdjust="spacingAndGlyphs" >UTF-8</text>
<text x="2036.9" y="1361.5" font-family="Liberation Sans" font-size="19.5" fill="#bbbbbb" font-weight="normal" textLength="69" lengthAdjust="spacingAndGlyphs" >4 个空格</text>
<path d="M2125.7,1353.2 V1350.5 a3.35,3.35 0 0 1 6.7,0 V1354" fill="none" stroke="#b4b6b8" stroke-width="2.2"/><rect x="2129" y="1353.5" width="12" height="9" fill="#b4b6b8" stroke="#3c3f41" stroke-width="0.6"/>
<path d="M383,320.5 L393.9,308.1 L394.4,312.6 L524.5,309.1 L396.2,326.8 L395.9,331.9 Z" fill="#fe2012"/>
<path d="M381,413.8 L393.4,402.3 L393.6,407.7 L490.9,416.5 L392.9,421.6 L392.6,426 Z" fill="#fe2012"/>
<path d="M937.9,264.2 L953.75,257.9 L952.1,262.5 L1094.2,332.5 L946.5,275.8 L944.6,279.6 Z" fill="#fe2012"/>
</svg>
</body></html>
